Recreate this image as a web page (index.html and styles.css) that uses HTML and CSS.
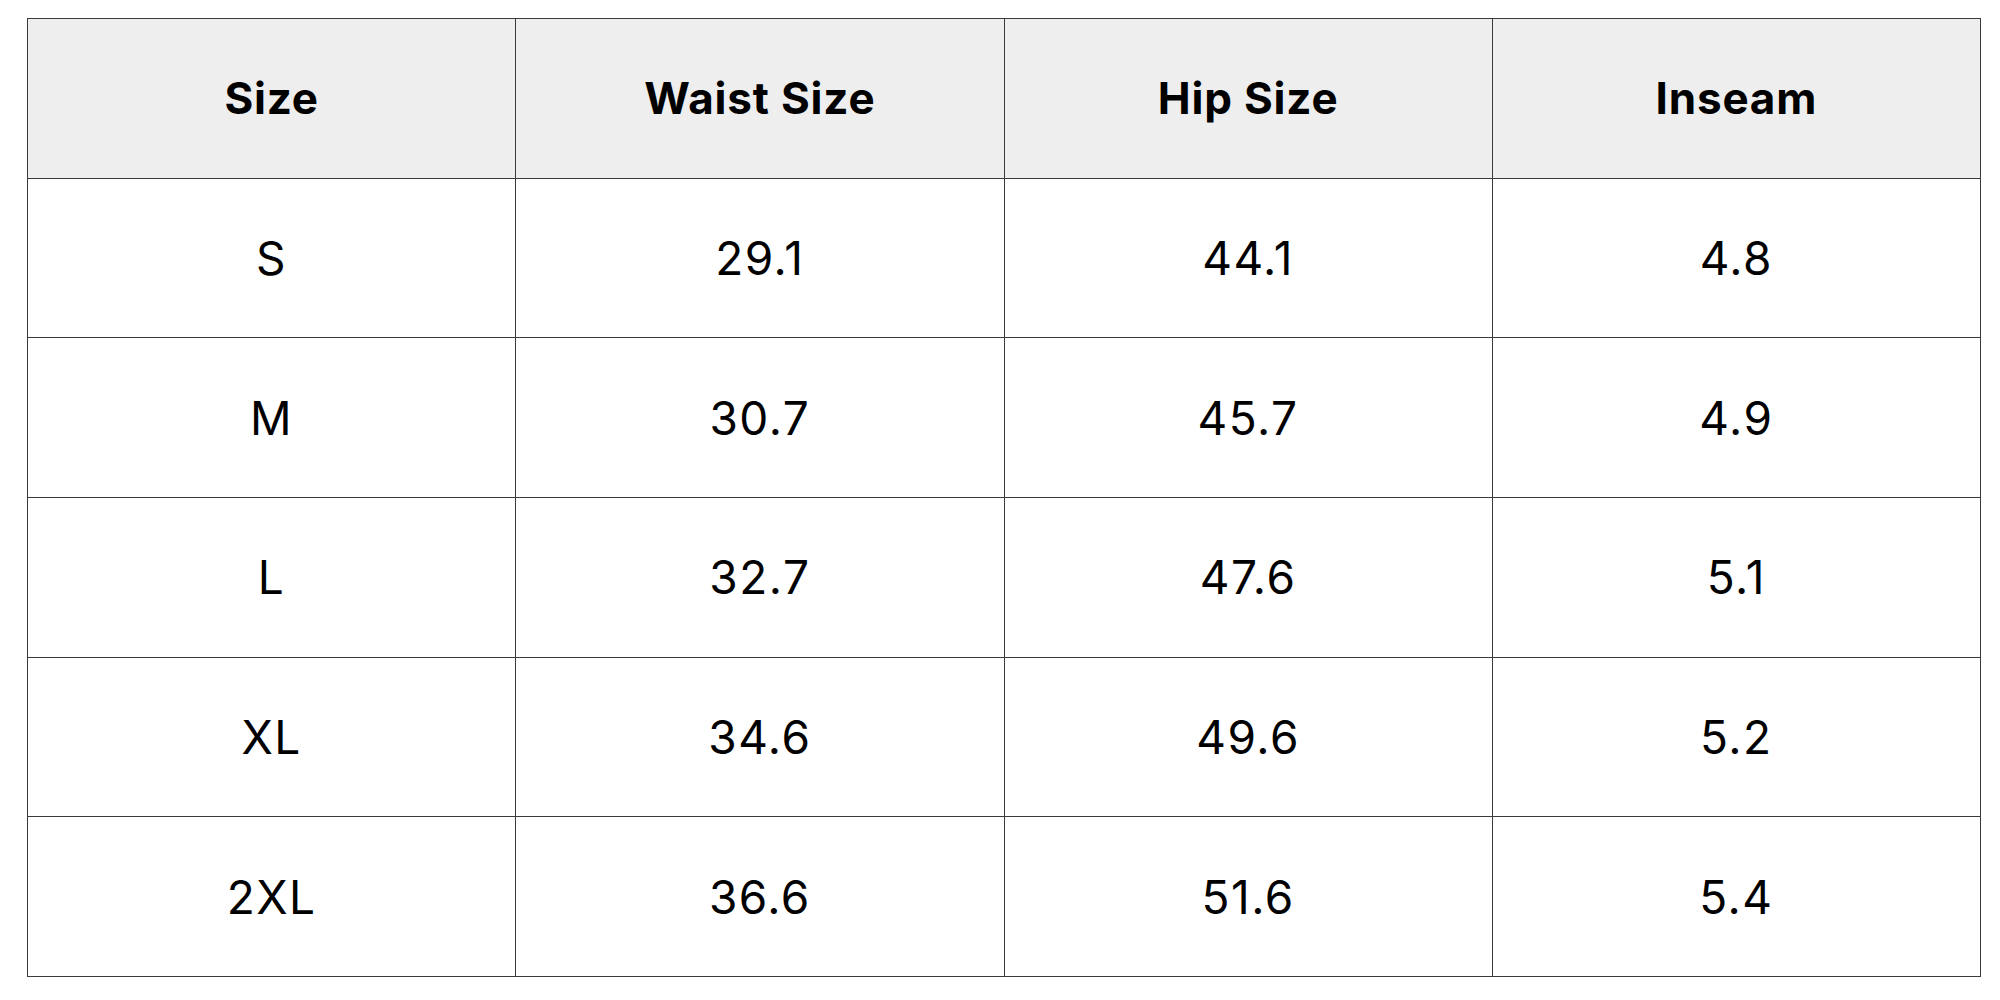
FILE: index.html
```html
<!DOCTYPE html>
<html>
<head>
<meta charset="utf-8">
<link rel="stylesheet" href="styles.css">
</head>
<body>
<table class="size-table">
  <thead>
    <tr><th>Size</th><th>Waist Size</th><th>Hip Size</th><th>Inseam</th></tr>
  </thead>
  <tbody>
    <tr><td>S</td><td>29.1</td><td>44.1</td><td>4.8</td></tr>
    <tr><td>M</td><td>30.7</td><td>45.7</td><td>4.9</td></tr>
    <tr><td>L</td><td>32.7</td><td>47.6</td><td>5.1</td></tr>
    <tr><td>XL</td><td>34.6</td><td>49.6</td><td>5.2</td></tr>
    <tr><td>2XL</td><td>36.6</td><td>51.6</td><td>5.4</td></tr>
  </tbody>
</table>
</body>
</html>
```
FILE: styles.css
```css
html, body {
  margin: 0;
  padding: 0;
  background: #ffffff;
}
body {
  padding: 18px 0 0 27px;
  font-family: Inter, "Liberation Sans", sans-serif;
  color: #000;
}
.size-table {
  border-collapse: collapse;
  width: 1954px;
  table-layout: fixed;
  border: 1px solid #444;
}
.size-table th,
.size-table td {
  border: 1px solid #3a3a3a;
  text-align: center;
  vertical-align: middle;
  padding: 0;
}
.size-table th {
  height: 158.7px;
  background: #eeeeee;
  font-weight: 700;
  font-size: 44px;
  letter-spacing: 0.8px;
}
.size-table td {
  height: 158.7px;
  font-weight: 400;
  font-size: 46px;
  letter-spacing: 1.5px;
}
```
